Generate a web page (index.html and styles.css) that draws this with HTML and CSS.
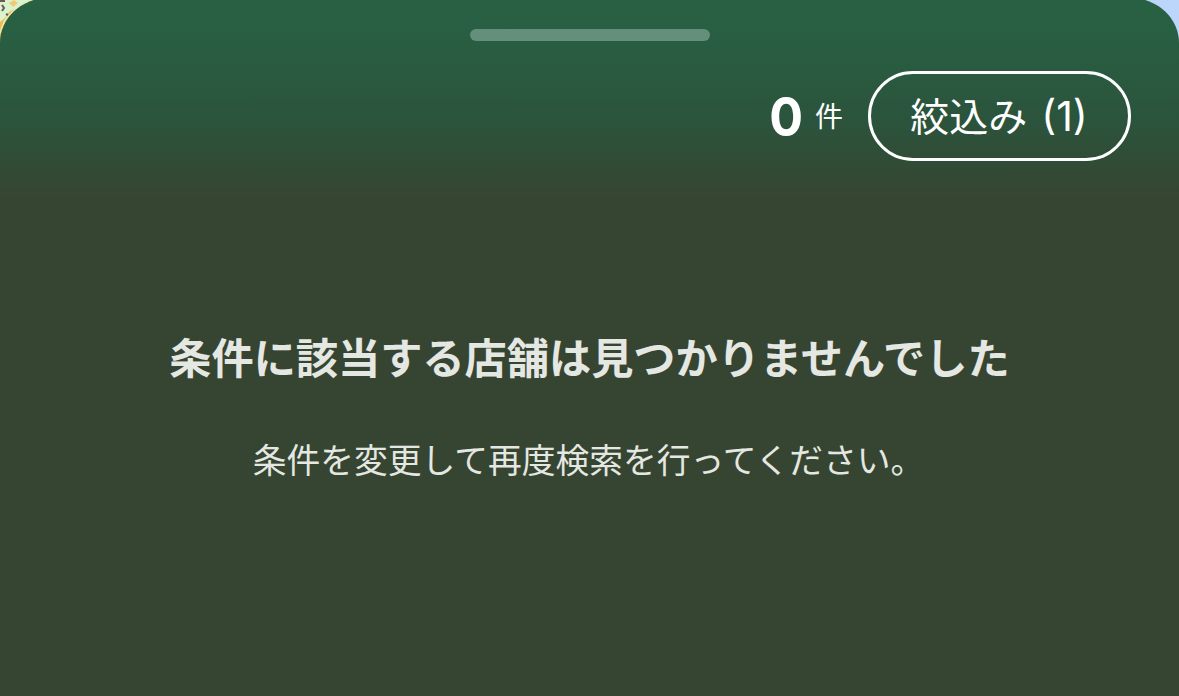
FILE: index.html
```
<!DOCTYPE html>
<html lang="ja">
<head>
    <meta charset="UTF-8">
    <meta name="viewport" content="width=device-width, initial-scale=1.0">
    <title>店舗検索</title>
    <link rel="stylesheet" href="styles.css">
</head>
<body>
    <!-- Map behind the sheet -->
    <svg class="map" viewBox="0 0 1179 60" aria-hidden="true">
        <rect width="1179" height="60" fill="#bcd5fb"/>
        <rect width="60" height="60" fill="#d9f3cf"/>
        <path d="M0 22 L7 16 L9 12 L14 9 L20 8 L24 3 L34 0 L40 0 L40 40 L0 40 Z" fill="#eebc52"/>
        <path d="M9 3 L14 0 L18 3 L13 7 Z" fill="#f3c976"/>
        <path d="M0 33 L5 20 L15 9 L28 2" fill="none" stroke="#e9eeb4" stroke-width="1.5"/>
        <path d="M0 1 H5 M2 5 L4 8 L2 11 M6 14 L8 15" fill="none" stroke="#695a54" stroke-width="2"/>
    </svg>

    <!-- Bottom sheet -->
    <main class="sheet">
        <div class="handle"></div>

        <div class="toolbar">
            <div class="count">
                <span class="count-number">0</span>
                <span class="count-unit">件</span>
            </div>
            <button class="filter-button" type="button">絞込み <span class="filter-count">(1)</span></button>
        </div>

        <div class="empty">
            <h1>条件に該当する店舗は見つかりませんでした</h1>
            <p>条件を変更して再度検索を行ってください。</p>
        </div>
    </main>
</body>
</html>
```
FILE: styles.css
```
* {
    box-sizing: border-box;
}

body {
    margin: 0;
    height: 696px;
    overflow: hidden;
    background: #364531;
    font-family: Inter, "Noto Sans CJK JP", sans-serif;
    color: #fff;
}

/* Map strip lies under the rounded corners of the sheet */
.map {
    position: absolute;
    top: 0;
    left: 0;
    width: 1179px;
    height: 60px;
}

.sheet {
    position: relative;
    height: 698px;
    margin-top: -2px;
    padding: 31px 48px 0;
    border-radius: 48px 48px 0 0 / 45px 45px 0 0;
    background: linear-gradient(#286143 0, #295c41 60px, #2b543c 120px, #364531 202px);
}

.handle {
    width: 240px;
    height: 12px;
    margin: 0 auto;
    border-radius: 6px;
    background: #648f7a;
}

.toolbar {
    display: flex;
    justify-content: flex-end;
    align-items: center;
    gap: 25px;
    height: 90px;
    margin-top: 30px;
}

.count {
    display: flex;
    align-items: center;
    gap: 11px;
}

.count-number {
    padding-top: 2px;
    font-size: 54px;
    font-weight: 700;
    line-height: 90px;
    transform: scaleX(0.93);
}

.count-unit {
    padding-top: 2px;
    font-size: 28px;
    line-height: 90px;
}

.filter-button {
    width: 263px;
    height: 90px;
    padding: 0 1px 5px 0;
    border: 3px solid #fff;
    border-radius: 45px;
    background: transparent;
    color: #fff;
    font-family: inherit;
    font-size: 39px;
    white-space: nowrap;
}

.filter-count {
    margin-left: 3px;
    font-size: 41px;
}

.empty {
    padding-top: 168px;
    text-align: center;
    color: #e5e7e3;
}

.empty h1 {
    margin: 0;
    font-size: 42.2px;
    font-weight: 700;
    line-height: 60px;
}

.empty p {
    margin: 47px 2px 0 0;
    font-size: 33.75px;
    line-height: 50px;
}
```
